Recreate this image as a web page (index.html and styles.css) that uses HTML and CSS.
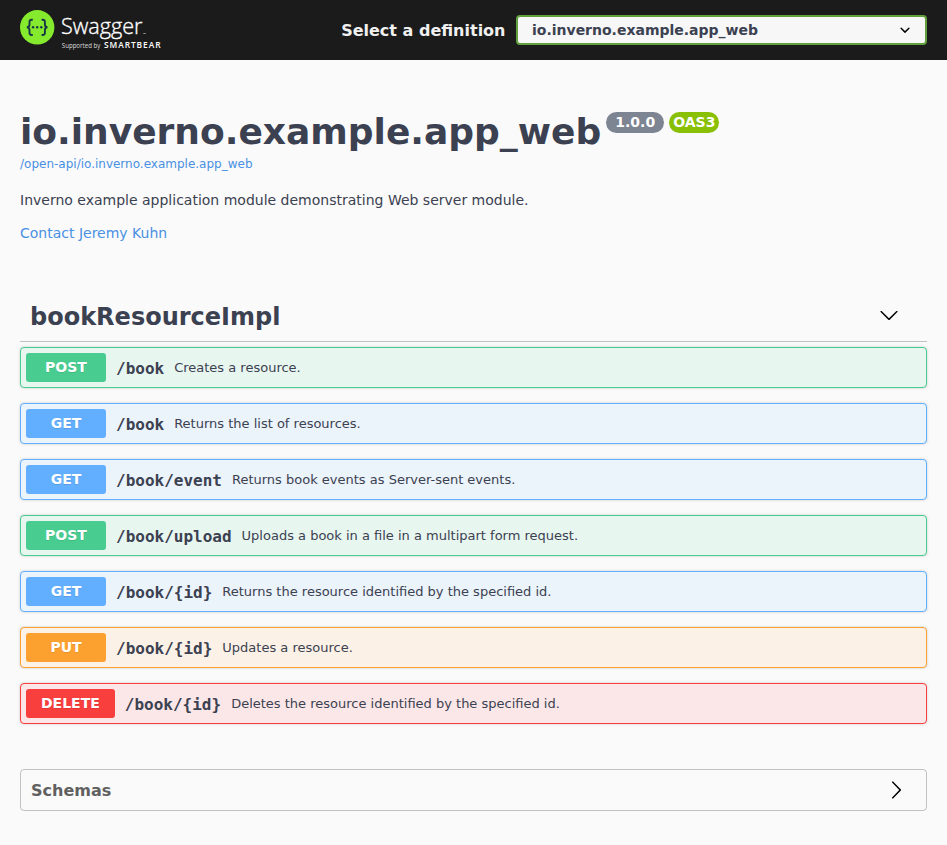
FILE: index.html
```html
<!DOCTYPE html>
<html lang="en">
<head>
<meta charset="utf-8">
<title>Swagger UI</title>
<link rel="stylesheet" href="styles.css">
</head>
<body>
<header class="topbar">
  <svg class="logo" width="142" height="42" viewBox="0 0 142 42" role="img" aria-label="Swagger, supported by SmartBear">
    <circle cx="17.2" cy="17.3" r="17.2" fill="#85ea2d"/>
    <g fill="none" stroke="#173647" stroke-width="1.9">
      <path d="M12.8 9.7h-1.1q-2.2 0-2.2 2.2v2.6q0 2.6-2.6 2.8q2.6.2 2.6 2.8v2.7q0 2.2 2.2 2.2h1.1"/>
      <path d="M21.6 9.7h1.1q2.2 0 2.2 2.2v2.6q0 2.6 2.6 2.8q-2.6.2-2.6 2.8v2.7q0 2.2-2.2 2.2h-1.1"/>
    </g>
    <g fill="#173647"><circle cx="13.1" cy="17.3" r="1.2"/><circle cx="17.2" cy="17.3" r="1.2"/><circle cx="21.3" cy="17.3" r="1.2"/></g>
    <text class="logo-name" x="41" y="24.3" textLength="81.5" lengthAdjust="spacingAndGlyphs">Swagger</text>
    <path d="M123.3 23.5h2.5" stroke="#aaa" stroke-width=".8"/>
    <text class="logo-by" x="41.8" y="38.2" textLength="38.5" lengthAdjust="spacingAndGlyphs">Supported by</text>
    <text class="logo-brand" x="84" y="38.2" textLength="56.5" lengthAdjust="spacing">SMARTBEAR</text>
  </svg>
  <label class="picker"><span>Select a definition</span>
    <span class="select"><span>io.inverno.example.app_web</span>
      <svg width="20" height="20" viewBox="0 0 20 20"><path d="M13.418 7.859a.695.695 0 0 1 .978 0 .68.68 0 0 1 0 .969l-3.908 3.83a.697.697 0 0 1-.979 0l-3.908-3.83a.68.68 0 0 1 0-.969.695.695 0 0 1 .978 0L10 11z"/></svg>
    </span>
  </label>
</header>
<main>
  <section class="info">
    <h1>io.inverno.example.app_web<span class="badges"><span class="badge">1.0.0</span><span class="badge oas">OAS3</span></span></h1>
    <a class="spec">/open-api/io.inverno.example.app_web</a>
    <p>Inverno example application module demonstrating Web server module.</p>
    <a class="contact">Contact Jeremy Kuhn</a>
  </section>
  <section class="operations">
    <h2><span>bookResourceImpl</span><svg width="20" height="20" viewBox="0 0 20 20"><path d="M17.418 6.109c.272-.268.709-.268.979 0s.271.701 0 .969l-7.908 7.83c-.27.268-.707.268-.979 0l-7.908-7.83c-.27-.268-.27-.701 0-.969.271-.268.709-.268.979 0L10 13.25z"/></svg></h2>
    <div class="op post"><span class="method">POST</span><span class="path">/book</span><span class="summary">Creates a resource.</span></div>
    <div class="op get"><span class="method">GET</span><span class="path">/book</span><span class="summary">Returns the list of resources.</span></div>
    <div class="op get"><span class="method">GET</span><span class="path">/book/event</span><span class="summary">Returns book events as Server-sent events.</span></div>
    <div class="op post"><span class="method">POST</span><span class="path">/book/upload</span><span class="summary">Uploads a book in a file in a multipart form request.</span></div>
    <div class="op get"><span class="method">GET</span><span class="path">/book/{id}</span><span class="summary">Returns the resource identified by the specified id.</span></div>
    <div class="op put"><span class="method">PUT</span><span class="path">/book/{id}</span><span class="summary">Updates a resource.</span></div>
    <div class="op delete"><span class="method">DELETE</span><span class="path">/book/{id}</span><span class="summary">Deletes the resource identified by the specified id.</span></div>
  </section>
  <section class="schemas"><h3>Schemas</h3><svg width="20" height="20" viewBox="0 0 20 20"><path d="M13.25 10L6.109 2.58c-.268-.27-.268-.707 0-.979.268-.27.701-.27.969 0l7.83 7.908c.268.271.268.709 0 .979l-7.83 7.908c-.268.271-.701.27-.969 0s-.268-.707 0-.979z"/></svg></section>
</main>
</body>
</html>
```
FILE: styles.css
```css
* { box-sizing: border-box; }
body { margin: 0; background: #fafafa; color: #3b4151; font-family: "DejaVu Sans", sans-serif; }
h1, h2, h3, p { margin: 0; }
.topbar { height: 60px; padding: 0 20px; background: #1b1b1b; display: flex; align-items: center; justify-content: space-between; }
.logo { display: block; margin-top: 2px; }
.logo-name { font: 300 22.4px "Open Sans", sans-serif; fill: #fff; stroke: #fff; stroke-width: .35px; }
.logo-by { font: 6.3px "Open Sans", sans-serif; fill: #ddd; }
.logo-brand { font: 600 8.4px "Open Sans", sans-serif; fill: #fff; }
.picker { display: flex; align-items: center; gap: 10.5px; color: #f0f0f0; font-size: 16px; font-weight: 700; }
.select { width: 411px; height: 30px; padding: 0 10px 0 14px; border: 2px solid #62a03f; border-radius: 4px; background: #f7f7f7; color: #3b4151; font-size: 14px; display: flex; align-items: center; justify-content: space-between; }
main { padding: 0 20px; }
.info { padding-top: 51px; height: 232px; display: flex; flex-direction: column; align-items: flex-start; }
h1 { font-size: 36px; line-height: 42px; display: flex; align-items: flex-start; white-space: nowrap; }
.badges { display: flex; gap: 5px; margin: 1px 0 0 5px; }
.badge { height: 21px; padding: 0 9px; border-radius: 21px; background: #7d8492; color: #fff; font-size: 14px; line-height: 21px; }
.oas { background: #89bf04; padding: 0 4px; }
a { color: #4990e2; }
.spec { font-size: 12px; line-height: 14px; margin-top: 4px; }
.info p { font-size: 14px; line-height: 17px; margin-top: 21px; }
.contact { font-size: 14px; line-height: 17px; margin-top: 16px; }
h2 { height: 50px; margin-bottom: 5px; padding: 0 28px 0 10px; border-bottom: 1px solid rgba(59,65,81,.3); font-size: 24px; display: flex; align-items: center; justify-content: space-between; }
h2 svg { margin-bottom: 4px; }
.op { height: 41px; margin-bottom: 15px; padding: 5px; border: 1px solid; border-radius: 4px; box-shadow: 0 0 3px rgba(0,0,0,.19); display: flex; align-items: center; }
.method { min-width: 80px; height: 29px; line-height: 28px; padding: 0 15px; border-radius: 3px; color: #fff; font-size: 14px; font-weight: 700; text-align: center; text-shadow: 0 1px 0 rgba(0,0,0,.1); }
.path { padding: 2px 10px 0; font: 700 16px "DejaVu Sans Mono", monospace; }
.summary { font-size: 13px; }
.op .path, .op .summary { color: #3b4151; }
.post { border-color: #49cc90; background: #e8f6f0; }
.post .method { background: #49cc90; }
.get { border-color: #61affe; background: #ebf3fb; }
.get .method { background: #61affe; }
.put { border-color: #fca130; background: #fbf1e6; }
.put .method { background: #fca130; }
.delete { border-color: #f93e3e; background: #fbe7e7; }
.delete .method { background: #f93e3e; }
.schemas { height: 42px; margin-top: 45px; padding: 0 20px 0 10px; border: 1px solid rgba(59,65,81,.3); border-radius: 4px; display: flex; align-items: center; justify-content: space-between; }
h3 { color: #606060; font-size: 16px; }
```
